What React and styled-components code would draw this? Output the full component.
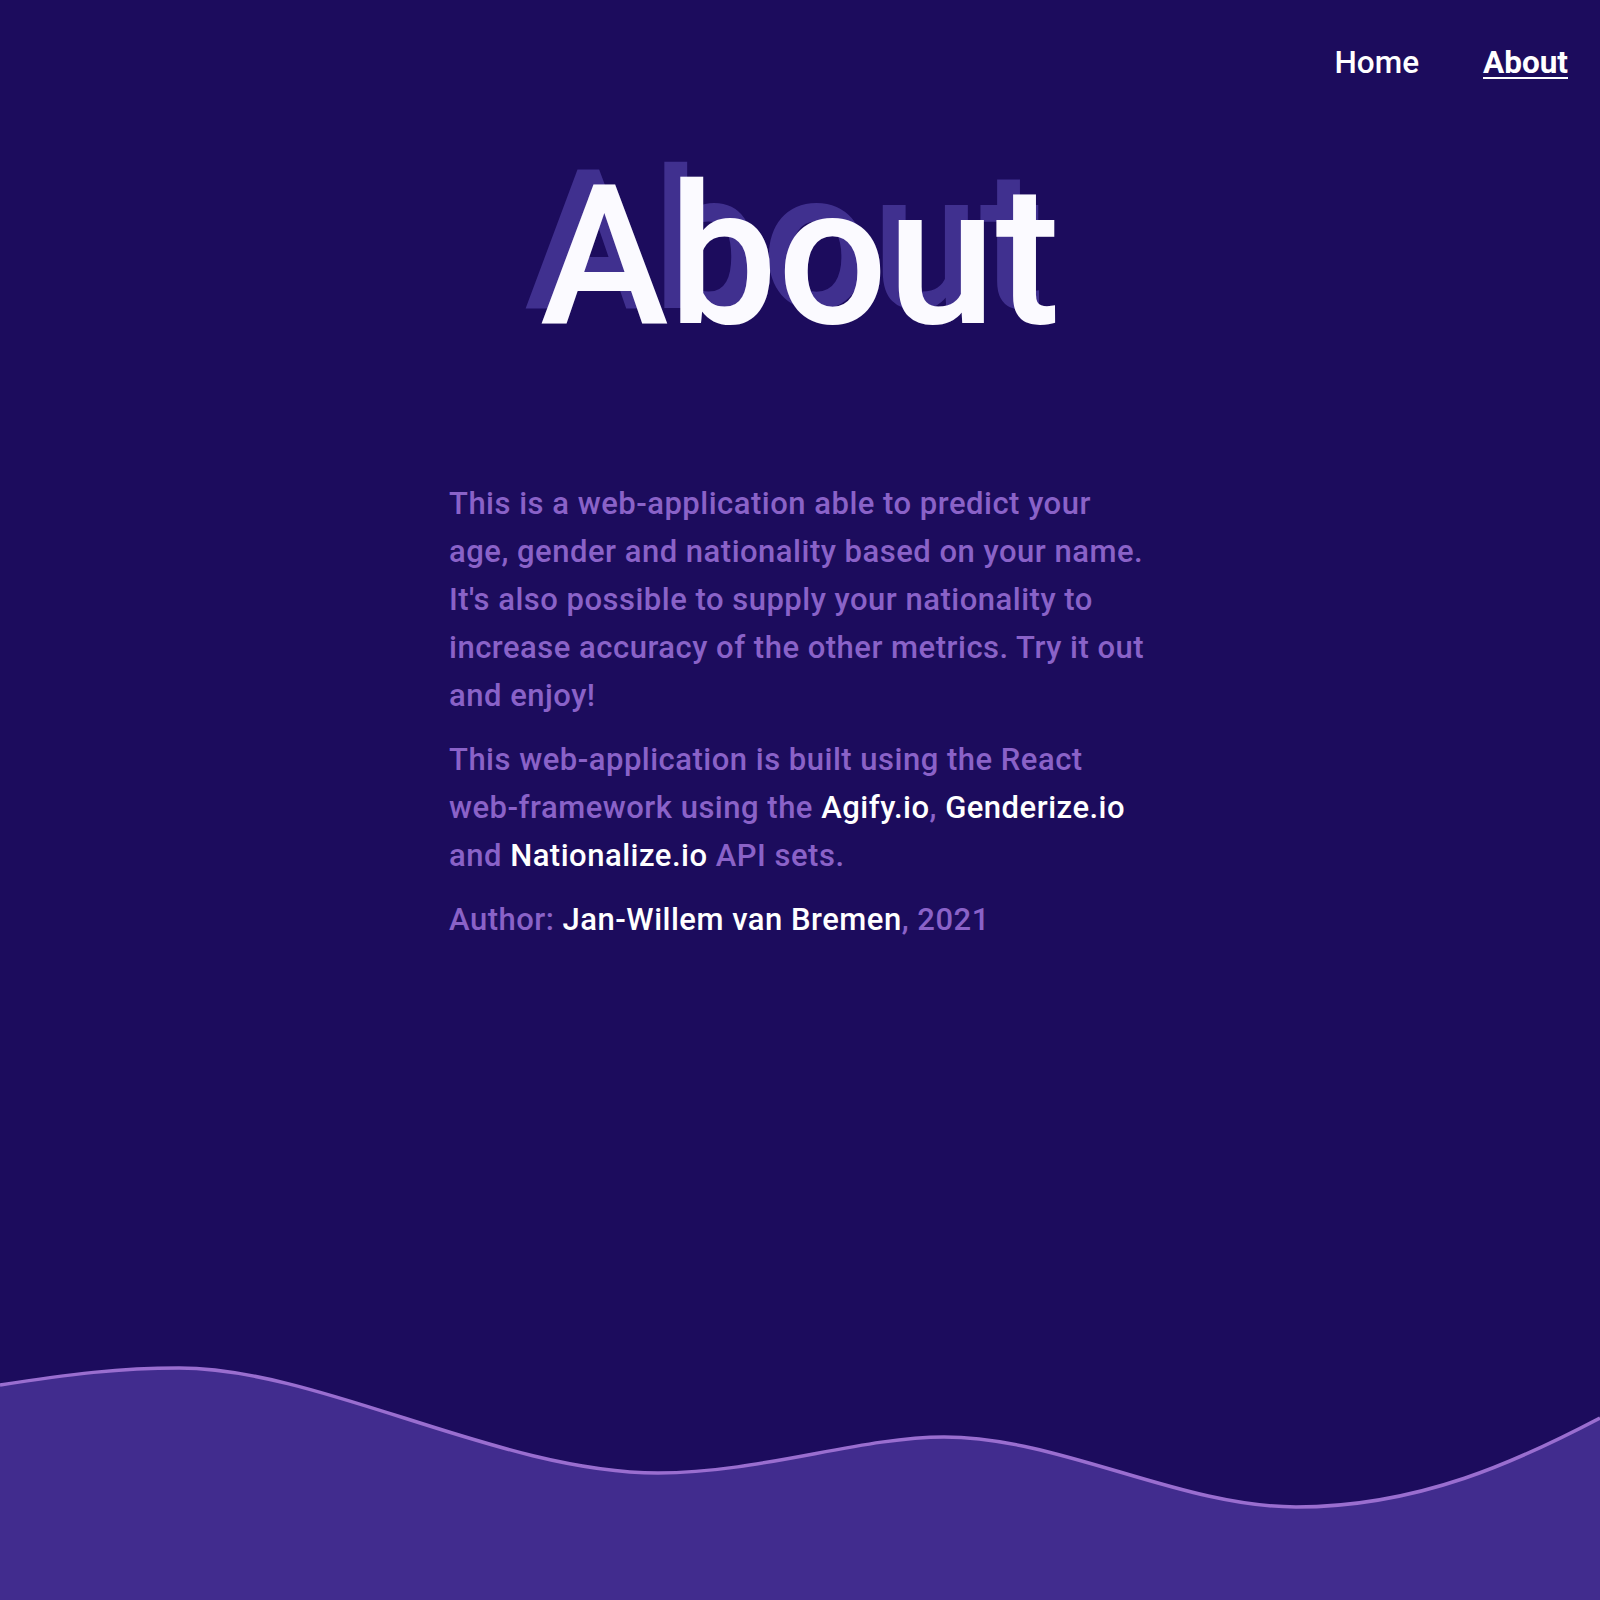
import React from "react";
import styled, { createGlobalStyle } from "styled-components";

const GlobalStyle = createGlobalStyle`
  html, body {
    margin: 0;
    padding: 0;
    background: #1c0c5d;
  }
  body {
    font-family: Roboto, "Noto Sans", "Liberation Sans", sans-serif;
  }
  * { box-sizing: border-box; }
`;

const Page = styled.div`
  min-height: 100vh;
  display: flex;
  flex-direction: column;
  background: #1c0c5d;
  overflow: hidden;
`;

const Nav = styled.nav`
  display: flex;
  justify-content: flex-end;
  gap: 64px;
  padding: 47px 32px 0;
`;

const NavLink = styled.a`
  font-size: 31.5px;
  line-height: 1;
  color: #ffffff;
  font-weight: ${(p) => (p.$active ? 700 : 500)};
  text-decoration: ${(p) => (p.$active ? "underline" : "none")};
  text-decoration-thickness: 2px;
  text-underline-offset: 4px;
  cursor: pointer;
`;

const Title = styled.h1`
  margin: 81px 0 0;
  text-align: center;
  font-size: 194px;
  line-height: 1;
  font-weight: 500;
  color: #fbfaff;
  text-shadow: -16px -15px 0 #40308f;
`;

const Article = styled.article`
  width: 702px;
  margin: 126px auto 0;
`;

const Para = styled.p`
  margin: 0 0 16px;
  font-size: 31px;
  line-height: 48px;
  font-weight: 500;
  letter-spacing: 0.5px;
  color: #8a62c8;
`;

const Strong = styled.a`
  color: #ffffff;
  font-weight: 500;
  text-decoration: none;
`;

const NoWrap = styled.span`
  white-space: nowrap;
`;

const WaveWrap = styled.div`
  margin-top: auto;
  height: 250px;
  display: flex;
`;

const Wave = styled.svg`
  width: 100%;
  height: 250px;
  display: block;
`;

function BottomWave() {
  const d =
    "M0 35 C70 24, 120 18, 179 18 C320 18, 500 123, 658 123 C760 123, 860 87, 944 87 C1060 87, 1180 157, 1296 157 C1420 157, 1520 110, 1600 68";
  return (
    <WaveWrap>
      <Wave viewBox="0 0 1600 250" preserveAspectRatio="none">
        <path d={`${d} L1600 250 L0 250 Z`} fill="#412c8e" />
        <path d={d} fill="none" stroke="#9a6ed0" strokeWidth="3.5" />
      </Wave>
    </WaveWrap>
  );
}

export default function App() {
  return (
    <>
      <GlobalStyle />
      <Page>
        <Nav>
          <NavLink>Home</NavLink>
          <NavLink $active>About</NavLink>
        </Nav>
        <Title>About</Title>
        <Article>
          <Para>
            This is a web-application able to predict your age, gender and
            nationality based on your name. It's also possible to supply your
            nationality to increase accuracy of the other metrics. Try it out
            and enjoy!
          </Para>
          <Para>
            This web-application is built using the React{" "}
            <NoWrap>web-framework</NoWrap> using the <Strong>Agify.io</Strong>,{" "}
            <Strong>Genderize.io</Strong> and <Strong>Nationalize.io</Strong>{" "}
            API sets.
          </Para>
          <Para>
            Author: <Strong>Jan-Willem van Bremen</Strong>, 2021
          </Para>
        </Article>
        <BottomWave />
      </Page>
    </>
  );
}
